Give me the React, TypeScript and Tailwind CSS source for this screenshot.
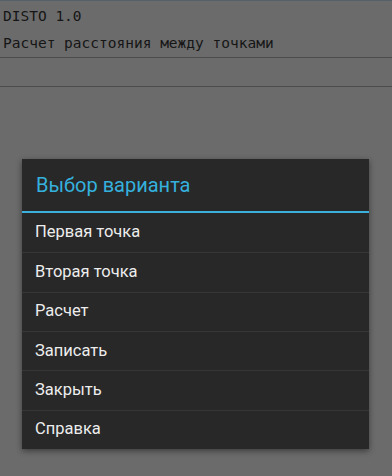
export default function App() {
  const items = ["Первая точка", "Вторая точка", "Расчет", "Записать", "Закрыть", "Справка"];

  return (
    <main className="relative w-[392px] h-[476px] overflow-hidden bg-[#6b6b6b]">
      {/* приложение под диалогом */}
      <div className="h-px bg-[#56606a]" />
      <div className="px-[3px] text-[14.5px] leading-none text-[#161616]" style={{ fontFamily: '"DejaVu Sans Mono", monospace' }}>
        <div className="h-[29px] flex items-center pt-[2px]">DISTO 1.0</div>
        <div className="h-[27px] flex items-center">Расчет расстояния между точками</div>
      </div>
      <div className="h-px bg-[#4c4c4c]" />
      <div className="h-[28px]" />
      <div className="h-px bg-[#4c4c4c]" />

      {/* диалог */}
      <div
        className="absolute left-[22px] top-[159px] w-[347px] bg-[#282828] shadow-[0_2px_6px_rgba(0,0,0,0.45)]"
        style={{ fontFamily: 'Roboto, "Noto Sans", sans-serif' }}
      >
        <div className="h-[52px] flex items-center pl-[14px] text-[20px] text-[#35b1de]">Выбор варианта</div>
        <div className="h-[2px] bg-[#3cb0da]" />
        {items.map((item, i) => (
          <div
            key={item}
            className={
              "h-[39.33px] flex items-center pl-[13px] text-[16.5px] text-[#ededed] " +
              (i > 0 ? "border-t border-[#373737]" : "")
            }
          >
            {item}
          </div>
        ))}
      </div>
    </main>
  );
}
